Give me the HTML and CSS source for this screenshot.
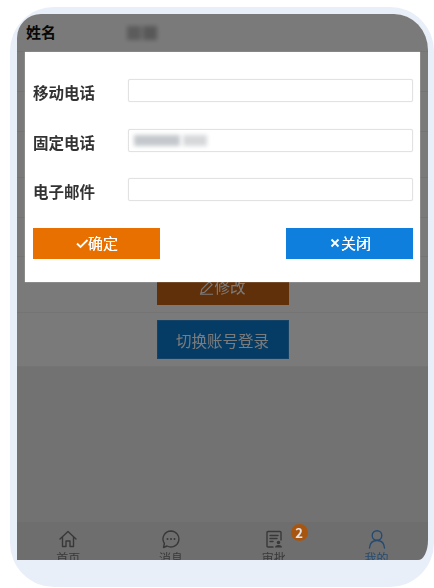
FILE: index.html
```html
<!DOCTYPE html>
<html lang="zh-CN">

<head>
    <meta charset="UTF-8">
    <meta name="viewport" content="width=device-width, initial-scale=1.0">
    <title>我的</title>
    <link rel="stylesheet" href="styles.css">
</head>

<body>
    <div class="frame">
        <div class="screen">
            <!-- Page behind the dialog -->
            <div class="page">
                <div class="info-row name-row">
                    <span class="info-label">姓名</span>
                    <span class="redacted name-value"></span>
                </div>
                <div class="info-row row-40"></div>
                <div class="info-row row-40"></div>
                <div class="info-row row-46"></div>
                <div class="info-row row-40"></div>
                <div class="info-row row-39"></div>
                <div class="action-row edit-row">
                    <button class="page-btn edit-btn">
                        <svg class="btn-icon" viewBox="0 0 16 16">
                            <path d="M2 14 L3 10 L11 2 L14 5 L6 13 Z M1 15.2 H15" />
                        </svg>修改
                    </button>
                </div>
                <div class="action-row switch-row">
                    <button class="page-btn switch-btn">切换账号登录</button>
                </div>
                <div class="tabbar">
                    <div class="tab">
                        <svg class="tab-icon" viewBox="0 0 20 20">
                            <path d="M2 10 L10 2.5 L18 10 M4.5 8 V17.5 H8 V12 H12 V17.5 H15.5 V8" />
                        </svg>
                        <span>首页</span>
                    </div>
                    <div class="tab">
                        <svg class="tab-icon" viewBox="0 0 20 20">
                            <path d="M10 2 A8 8 0 1 1 6 17 L2.5 18.5 L3.4 14.5 A8 8 0 0 1 10 2 Z" />
                            <circle class="dot" cx="6.5" cy="10" r="1" />
                            <circle class="dot" cx="10" cy="10" r="1" />
                            <circle class="dot" cx="13.5" cy="10" r="1" />
                        </svg>
                        <span>消息</span>
                    </div>
                    <div class="tab">
                        <svg class="tab-icon" viewBox="0 0 20 20">
                            <path d="M9 18 H4 Q3 18 3 17 V3.5 Q3 2.5 4 2.5 H16 Q17 2.5 17 3.5 V11 M6 6.5 H14 M6 9.5 H13 M6 12.5 H9" />
                            <circle class="solid" cx="14.5" cy="13.5" r="1.8" />
                            <path class="solid" d="M11 18.5 Q11 16 14.5 16 Q18 16 18 18.5 Z" />
                        </svg>
                        <span>审批</span>
                        <span class="badge">2</span>
                    </div>
                    <div class="tab tab-active">
                        <svg class="tab-icon" viewBox="0 0 20 20">
                            <circle cx="10" cy="6.5" r="4.8" />
                            <path d="M2.5 19 Q3 11.5 10 11.5 Q17 11.5 17.5 19" />
                        </svg>
                        <span>我的</span>
                    </div>
                </div>
            </div>

            <div class="mask"></div>

            <!-- Edit dialog -->
            <div class="modal">
                <div class="form-row">
                    <label class="form-label">移动电话</label>
                    <div class="form-input"></div>
                </div>
                <div class="form-row row-shift">
                    <label class="form-label">固定电话</label>
                    <div class="form-input">
                        <span class="redacted phone-a"></span>
                        <span class="redacted phone-b"></span>
                    </div>
                </div>
                <div class="form-row">
                    <label class="form-label">电子邮件</label>
                    <div class="form-input"></div>
                </div>
                <div class="modal-actions">
                    <button class="modal-btn ok-btn">
                        <svg class="modal-icon" viewBox="0 0 14 14">
                            <path d="M2 7.5 L5.5 11 L12.5 4" />
                        </svg>确定
                    </button>
                    <button class="modal-btn close-btn">
                        <svg class="modal-icon" viewBox="0 0 14 14">
                            <path d="M3.5 3.5 L10.5 10.5 M10.5 3.5 L3.5 10.5" />
                        </svg>关闭
                    </button>
                </div>
            </div>
        </div>
    </div>
</body>

</html>
```

FILE: styles.css
```css
* {
    box-sizing: border-box;
}

body {
    margin: 0;
    background: #fff;
    font-family: "Noto Sans CJK SC", "Liberation Sans", sans-serif;
    overflow: hidden;
}

button {
    font-family: inherit;
    padding: 0;
}

.frame {
    width: 424px;
    height: 580px;
    margin: 7px 0 0 10px;
    padding: 7px 6px 27px 7px;
    background: #e9eff9;
    border-radius: 44px;
}

.screen {
    position: relative;
    height: 546px;
    overflow: hidden;
    border-radius: 24px 34px 10px 0 / 24px 36px 20px 0;
    filter: blur(0.4px);
}

.page {
    height: 100%;
    display: flex;
    flex-direction: column;
    background: #eee;
}

.info-row {
    flex: none;
    background: #fff;
    border-bottom: 1px solid #f2f2f2;
}

.name-row {
    height: 38px;
    display: flex;
    align-items: center;
    padding-left: 9px;
}

.row-40 {
    height: 40px;
}

.row-46 {
    height: 46px;
}

.row-39 {
    height: 39px;
}

.info-label {
    width: 101px;
    margin-top: -2px;
    font-size: 15px;
    font-weight: 700;
    color: #111;
}

.redacted {
    display: block;
    filter: blur(2px);
}

.name-value {
    width: 30px;
    height: 14px;
    background: linear-gradient(90deg, #c0c0c0 0 45%, #dedede 45% 58%, #b8b8b8 58% 100%);
}

.action-row {
    flex: none;
    display: flex;
    justify-content: center;
    background: #fff;
    border-bottom: 1px solid #f2f2f2;
}

.edit-row {
    height: 56px;
    padding-top: 9px;
}

.switch-row {
    height: 54px;
    padding-top: 7px;
}

.page-btn {
    width: 132px;
    height: 39px;
    border: 1px solid transparent;
    color: #fff;
    font-size: 15.5px;
}

.edit-btn {
    background: #c86416;
}

.switch-btn {
    background: #0c7ed4;
    border-color: #2a8cd8;
}

.btn-icon {
    width: 15px;
    height: 15px;
    vertical-align: -2px;
    fill: none;
    stroke: #fff;
    stroke-width: 1.2;
}

.tabbar {
    margin-top: auto;
    flex: none;
    height: 38px;
    display: flex;
    background: #e6e6e6;
}

.tab {
    flex: 1;
    display: flex;
    flex-direction: column;
    align-items: center;
    position: relative;
    padding-top: 7px;
    font-size: 12px;
    line-height: 17px;
    color: #777;
}

.tab-icon {
    flex: none;
    width: 20px;
    height: 20px;
    fill: none;
    stroke: #757575;
    stroke-width: 1.4;
    stroke-linejoin: round;
    stroke-linecap: round;
}

.tab .dot,
.tab .solid {
    fill: #757575;
    stroke: none;
}

.tab-active {
    color: #4e9be8;
}

.tab-active .tab-icon {
    stroke: #4e9be8;
}

.badge {
    position: absolute;
    z-index: 2;
    top: 2px;
    left: 68px;
    width: 17px;
    height: 17px;
    border-radius: 50%;
    background: #a85510;
    color: #e4e4e4;
    font-size: 13px;
    font-weight: 700;
    line-height: 17px;
    text-align: center;
}

.mask {
    position: absolute;
    z-index: 1;
    inset: 0;
    background: rgba(0, 0, 0, 0.52);
}

.modal {
    position: absolute;
    z-index: 3;
    top: 38px;
    left: 8px;
    width: 395px;
    height: 230px;
    padding: 27px 7px 0 8px;
    display: flex;
    flex-direction: column;
    gap: 26px;
    background: #fff;
    box-shadow: 0 0 1px #ddd;
}

.form-row {
    display: flex;
    height: 23px;
}

.row-shift {
    margin-top: 1px;
}

.form-label {
    flex: none;
    width: 95px;
    padding-top: 2px;
    font-size: 15.5px;
    font-weight: 700;
    line-height: 23px;
    color: #333;
}

.form-input {
    flex: 1;
    display: flex;
    align-items: center;
    gap: 3px;
    padding-left: 5px;
    border: 1px solid #e2e2e2;
    border-radius: 2px;
    background: #fff;
    box-shadow: 0 0 1px #e2e2e2;
}

.phone-a,
.phone-b {
    height: 11px;
    background: #c4c8cc;
}

.phone-a {
    width: 46px;
}

.phone-b {
    width: 24px;
    background: #d6d8da;
}

.modal-actions {
    display: flex;
    justify-content: space-between;
    margin-top: 1px;
}

.modal-btn {
    width: 127px;
    height: 31px;
    display: flex;
    align-items: center;
    justify-content: center;
    padding-bottom: 2px;
    border: none;
    color: #fff;
    font-size: 15px;
    text-shadow: 0 0 0.6px #fff;
}

.ok-btn {
    background: #e87000;
}

.close-btn {
    background: #0e7fdd;
}

.modal-icon {
    width: 14px;
    height: 14px;
    margin-right: -1px;
    fill: none;
    stroke: #fff;
    stroke-width: 1.8;
}
```
